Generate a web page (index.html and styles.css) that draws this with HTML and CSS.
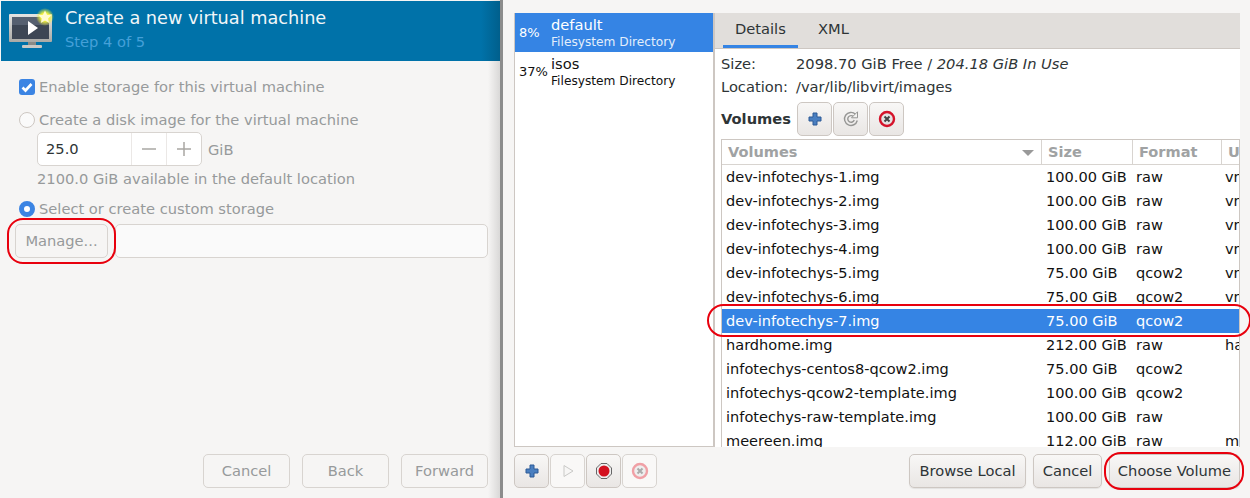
FILE: index.html
```html
<!DOCTYPE html>
<html lang="en">
<head>
<meta charset="UTF-8">
<title>Create a new virtual machine</title>
<link rel="stylesheet" href="styles.css">
</head>
<body>
<div class="wizard">
    <div class="wizard-header">
        <svg class="vm-icon" width="54" height="50" viewBox="0 0 54 50">
            <defs>
                <radialGradient id="glow"><stop offset="0.45" stop-color="#f2f23a"/><stop offset="1" stop-color="#f2f23a" stop-opacity="0"/></radialGradient>
                <linearGradient id="bezel" x1="0" y1="0" x2="0" y2="1"><stop offset="0" stop-color="#e4e4e2"/><stop offset="1" stop-color="#a9a9a5"/></linearGradient>
            </defs>
            <rect x="9" y="14" width="43" height="28" rx="1" fill="url(#bezel)"/>
            <rect x="12" y="17" width="37" height="22" fill="#3d4654"/>
            <rect x="12" y="17" width="37" height="8" fill="#566070"/>
            <rect x="28" y="42" width="8" height="3" fill="#8a8a86"/>
            <rect x="22" y="45" width="20" height="3" rx="1" fill="#c9c9c5"/>
            <path d="M28 21l10 7-10 7z" fill="#fff"/>
            <circle cx="45" cy="17" r="9" fill="url(#glow)"/>
            <path d="M45 10.500l2 4.300 4.600.5-3.400 3.100 1 4.600-4.200-2.400-4.200 2.400 1-4.600-3.400-3.100 4.600-.5z" fill="#fffbd0"/>
        </svg>
        <div class="wizard-heading">
            <div class="wizard-title">Create a new virtual machine</div>
            <div class="wizard-step">Step 4 of 5</div>
        </div>
    </div>
    <div class="wizard-body">
        <div class="option"><span class="check"><svg width="16" height="16" viewBox="0 0 16 16"><path d="M3.500 8.500l3 3 6-6.500" fill="none" stroke="#fff" stroke-width="2.600"/></svg></span>Enable storage for this virtual machine</div>
        <div class="option option-disk"><span class="radio"></span>Create a disk image for the virtual machine</div>
        <div class="size-row">
            <div class="spin">
                <span class="spin-value">25.0</span>
                <span class="spin-btn"><svg width="16" height="16" viewBox="0 0 16 16"><path d="M1 8h14" stroke="#a9a7a3" stroke-width="1.500"/></svg></span>
                <span class="spin-btn"><svg width="16" height="16" viewBox="0 0 16 16"><path d="M1 8h14M8 1v14" stroke="#a9a7a3" stroke-width="1.500"/></svg></span>
            </div>
            <span>GiB</span>
        </div>
        <div class="avail">2100.0 GiB available in the default location</div>
        <div class="option option-custom"><span class="radio radio-on"></span>Select or create custom storage</div>
        <div class="manage-row">
            <div class="btn btn-off btn-manage">Manage...</div>
            <div class="path-entry"></div>
        </div>
    </div>
    <div class="wizard-footer">
        <div class="btn btn-off">Cancel</div>
        <div class="btn btn-off">Back</div>
        <div class="btn btn-off">Forward</div>
    </div>
    <div class="ring ring-manage"></div>
</div>

<div class="browser">
    <div class="browser-main">
        <div class="pools">
            <div class="pool pool-selected">
                <span class="pool-pct">8%</span>
                <div class="pool-text"><div class="pool-name">default</div><div class="pool-type">Filesystem Directory</div></div>
            </div>
            <div class="pool">
                <span class="pool-pct">37%</span>
                <div class="pool-text"><div class="pool-name">isos</div><div class="pool-type">Filesystem Directory</div></div>
            </div>
        </div>
        <div class="details">
            <div class="tabs">
                <div class="tab tab-active">Details</div>
                <div class="tab">XML</div>
            </div>
            <div class="details-body">
                <div class="info-row"><span class="info-label">Size:</span><span>2098.70 GiB Free / <em>204.18 GiB In Use</em></span></div>
                <div class="info-row"><span class="info-label">Location:</span><span>/var/lib/libvirt/images</span></div>
                <div class="vol-bar">
                    <strong>Volumes</strong>
                    <div class="btn-group">
                        <div class="icon-btn"><svg width="16" height="16" viewBox="0 0 16 16"><path d="M6 2h4v4h4v4h-4v4H6v-4H2V6h4z" fill="#4a7fc0" stroke="#2c5a96"/></svg></div>
                        <div class="icon-btn"><svg width="18" height="18" viewBox="0 0 18 18"><path d="M13.500 4.200A6.500 6.500 0 1 0 15.300 10.500" fill="none" stroke="#969694" stroke-width="1.400"/><path d="M11.500 6.700A3.300 3.300 0 1 0 12.200 10" fill="none" stroke="#969694" stroke-width="1.400"/><path d="M15.500 1.800v6h-6z" fill="#f4f3f1" stroke="#969694"/></svg></div>
                        <div class="icon-btn"><svg width="18" height="18" viewBox="0 0 18 18"><circle cx="9" cy="9" r="7" fill="#e4e4e4" stroke="#d5132a" stroke-width="2.400"/><path d="M6.500 6.500l5 5M11.500 6.500l-5 5" stroke="#444" stroke-width="2"/></svg></div>
                    </div>
                </div>
                <div class="vol-table">
                    <div class="vol-head">
                        <div class="vol-head-cell vol-head-name">Volumes<span class="sort-arrow"></span></div>
                        <div class="vol-head-cell">Size</div>
                        <div class="vol-head-cell">Format</div>
                        <div class="vol-head-cell">Used By</div>
                    </div>
                    <div class="vol-row"><span>dev-infotechys-1.img</span><span>100.00 GiB</span><span>raw</span><span>vm1</span></div>
                    <div class="vol-row"><span>dev-infotechys-2.img</span><span>100.00 GiB</span><span>raw</span><span>vm2</span></div>
                    <div class="vol-row"><span>dev-infotechys-3.img</span><span>100.00 GiB</span><span>raw</span><span>vm3</span></div>
                    <div class="vol-row"><span>dev-infotechys-4.img</span><span>100.00 GiB</span><span>raw</span><span>vm4</span></div>
                    <div class="vol-row"><span>dev-infotechys-5.img</span><span>75.00 GiB</span><span>qcow2</span><span>vm5</span></div>
                    <div class="vol-row"><span>dev-infotechys-6.img</span><span>75.00 GiB</span><span>qcow2</span><span>vm6</span></div>
                    <div class="vol-row vol-row-selected"><span>dev-infotechys-7.img</span><span>75.00 GiB</span><span>qcow2</span><span></span></div>
                    <div class="vol-row"><span>hardhome.img</span><span>212.00 GiB</span><span>raw</span><span>hardhome</span></div>
                    <div class="vol-row"><span>infotechys-centos8-qcow2.img</span><span>75.00 GiB</span><span>qcow2</span><span></span></div>
                    <div class="vol-row"><span>infotechys-qcow2-template.img</span><span>100.00 GiB</span><span>qcow2</span><span></span></div>
                    <div class="vol-row"><span>infotechys-raw-template.img</span><span>100.00 GiB</span><span>raw</span><span></span></div>
                    <div class="vol-row"><span>meereen.img</span><span>112.00 GiB</span><span>raw</span><span>meereen</span></div>
                </div>
            </div>
        </div>
    </div>
    <div class="browser-footer">
        <div class="btn-group">
            <div class="icon-btn"><svg width="16" height="16" viewBox="0 0 16 16"><path d="M6 2h4v4h4v4h-4v4H6v-4H2V6h4z" fill="#4a7fc0" stroke="#2c5a96"/></svg></div>
            <div class="icon-btn icon-btn-off"><svg width="16" height="16" viewBox="0 0 16 16"><path d="M4 2.500l9 5.500-9 5.500z" fill="#f7f6f5" stroke="#c9c9c7"/></svg></div>
            <div class="icon-btn"><svg width="18" height="18" viewBox="0 0 18 18"><path d="M6 1.500h6L16.500 6v6L12 16.500H6L1.500 12V6z" fill="#eee" stroke="#666"/><circle cx="9" cy="9" r="5.500" fill="#d3101f"/></svg></div>
            <div class="icon-btn icon-btn-off"><svg width="18" height="18" viewBox="0 0 18 18"><circle cx="9" cy="9" r="7" fill="#eee" stroke="#f0a0a6" stroke-width="2.400"/><path d="M6.500 6.500l5 5M11.500 6.500l-5 5" stroke="#aaa" stroke-width="2"/></svg></div>
        </div>
        <div class="footer-right">
            <div class="btn btn-raised btn-browse">Browse Local</div>
            <div class="btn btn-raised btn-cancel">Cancel</div>
            <div class="btn btn-raised btn-choose">Choose Volume</div>
        </div>
    </div>
    <div class="ring ring-row"></div>
    <div class="ring ring-choose"></div>
</div>
</body>
</html>
```

FILE: styles.css
```css
* { margin:0; padding:0; box-sizing:border-box; }
body {
    font-family: "DejaVu Sans", sans-serif;
    font-size: 14.67px;
    width: 1250px;
    height: 498px;
    overflow: hidden;
    display: flex;
    background: #f6f5f4;
    color: #2e3436;
}

/* left window */
.wizard {
    position: relative;
    flex: 0 0 500px;
    height: 498px;
    display: flex;
    flex-direction: column;
    padding-top: 1px;
    padding-left: 1px;
    background: linear-gradient(90deg, #f6f5f4 488px, #d9d8d7 500px);
    color: #979a9b;
}
.wizard-header {
    height: 60px;
    background: linear-gradient(90deg, #0072a9 480px, #005f8c 499px);
    display: flex;
    gap: 12px;
}
.vm-icon { margin: -1px -1px 0 -1px; flex-shrink: 0; }
.wizard-heading { padding-top: 5px; }
.wizard-title { color: #f2f6f8; font-size: 17.7px; line-height: 24px; }
.wizard-step { color: #45a0d8; line-height: 18px; margin-top: 3px; }
.wizard-body {
    flex: 1;
    padding: 0 0 0 18px;
    display: flex;
    flex-direction: column;
}
.option {
    display: flex;
    align-items: center;
    gap: 4px;
    height: 16px;
    line-height: 14px;
    margin-top: 18px;
}
.option-disk { margin-top: 17px; }
.option-custom { margin-top: 12px; }
.check {
    width: 16px;
    height: 16px;
    background: #3b84e3;
    border-radius: 3px;
}
.check svg { display: block; }
.radio {
    width: 16px;
    height: 16px;
    border-radius: 50%;
    border: 1px solid #cdc7c2;
    background: #fafafa;
}
.radio-on { border: 5px solid #3b84e3; background: #fff; }
.size-row {
    display: flex;
    align-items: center;
    gap: 6px;
    margin: 4px 0 0 18px;
}
.spin {
    width: 165px;
    height: 34px;
    display: flex;
    background: #fff;
    border: 1px solid #d8d4d0;
    border-radius: 5px;
}
.spin-value { flex: 1; color: #2e3436; line-height: 32px; padding-left: 8px; }
.spin-btn {
    width: 35px;
    border-left: 1px solid #ebe8e6;
    display: flex;
    align-items: center;
    justify-content: center;
}
.avail { margin: 5px 0 0 18px; height: 18px; line-height: 16px; }
.manage-row {
    display: flex;
    gap: 7px;
    margin: 7px 0 0 -4px;
}
.btn-manage { width: 93px; }
.path-entry {
    width: 373px;
    height: 34px;
    background: #fafafa;
    border: 1px solid #d8d4d0;
    border-radius: 5px;
}
.wizard-footer {
    display: flex;
    justify-content: flex-end;
    gap: 12px;
    padding: 0 12px 10px 0;
}
.wizard-footer .btn { width: 87px; }

/* buttons */
.btn {
    height: 34px;
    line-height: 32px;
    text-align: center;
    white-space: nowrap;
    border: 1px solid #cdc7c2;
    border-radius: 5px;
}
.btn-off { background: #f6f5f4; color: #979a9b; border-color: #d8d4d0; }
.btn-raised {
    background: linear-gradient(#f8f7f6, #e9e6e4);
    color: #2e3436;
    box-shadow: 0 1px 1px rgba(0,0,0,0.08);
}
.btn-browse { width: 117px; }
.btn-cancel { width: 69px; }
.btn-choose { width: 131px; }
.btn-group { display: flex; gap: 1px; }
.icon-btn {
    width: 35px;
    height: 34px;
    border: 1px solid #cdc7c2;
    border-radius: 5px;
    background: linear-gradient(#f8f7f6, #e9e6e4);
    display: flex;
    align-items: center;
    justify-content: center;
}
.icon-btn-off { background: #f9f8f7; border-color: #d8d4d0; }

/* right window */
.browser {
    position: relative;
    flex: 1;
    min-width: 0;
    display: flex;
    flex-direction: column;
    border-left: 3px solid #8c8c8c;
    padding: 13px 10px 0 11px;
}
.browser-main {
    display: flex;
    height: 434px;
}
.pools {
    flex: 0 0 201px;
    background: #fff;
    border: 1px solid #cdc7c2;
    border-top: none;
    border-right-width: 2px;
}
.pool {
    height: 39px;
    display: flex;
    align-items: center;
    color: #111;
}
.pool-selected { background: #3584e4; color: #fff; }
.pool-pct { width: 36px; padding-left: 4px; font-size: 13px; flex-shrink: 0; }
.pool-text { padding-top: 1px; }
.pool-name { line-height: 17px; margin-bottom: 1px; }
.pool-type { font-size: 12.2px; line-height: 17px; }
.pool-selected .pool-type { color: #e3eefb; }
.details {
    flex: 1;
    min-width: 0;
    display: flex;
    flex-direction: column;
    background: #fff;
}
.tabs {
    height: 36px;
    flex-shrink: 0;
    background: #e1dedb;
    border-bottom: 1px solid #cdc7c2;
    display: flex;
    padding-left: 8px;
}
.tab {
    padding: 0 13px;
    line-height: 31px;
    height: 35px;
}
.tab-active { border-bottom: 3px solid #3584e4; width: 75px; margin-right: 7px; padding: 0 12px; }
.details-body {
    flex: 1;
    min-height: 0;
    padding: 4px 0 0 6px;
    display: flex;
    flex-direction: column;
}
.info-row { height: 23px; line-height: 21px; display: flex; }
.info-label { width: 75px; }
.vol-bar {
    display: flex;
    align-items: center;
    gap: 6px;
    margin-top: 3px;
    height: 34px;
}
.vol-bar strong { padding-bottom: 2px; }
.vol-table {
    margin-top: 3px;
    flex: 1;
    min-height: 0;
    overflow: hidden;
    border: 1px solid #cdc7c2;
    border-bottom: none;
    color: #111;
    font-size: 14.55px;
}
.vol-head, .vol-row {
    display: grid;
    grid-template-columns: 319px 91px 89px 60px;
}
.vol-head {
    height: 25px;
    border-bottom: 1px solid #d8d4d0;
}
.vol-head-cell {
    font-weight: bold;
    color: #a0a2a3;
    line-height: 24px;
    padding-left: 6px;
    border-left: 1px solid #d8d4d0;
    white-space: nowrap;
}
.vol-head-name { border-left: none; position: relative; }
.sort-arrow {
    position: absolute;
    right: 7px;
    top: 10px;
    border-left: 6px solid transparent;
    border-right: 6px solid transparent;
    border-top: 6px solid #999;
}
.vol-row {
    height: 24px;
    line-height: 24px;
    white-space: nowrap;
}
.vol-row span { padding-left: 4px; overflow: hidden; }
.vol-row span:nth-child(2) { padding-left: 5px; }
.vol-row-selected { background: #3584e4; color: #fff; }
.browser-footer {
    display: flex;
    justify-content: space-between;
    margin-top: 7px;
}
.footer-right { display: flex; gap: 7px; }

/* red marks drawn over the screenshot */
.ring {
    position: absolute;
    border: 2px solid #e8000d;
    pointer-events: none;
}
.ring-manage { left: 7px; top: 218px; width: 109px; height: 46px; border-radius: 16px; }
.ring-row { left: 204px; top: 304px; width: 544px; height: 33px; border-radius: 17px; }
.ring-choose { left: 601px; top: 452px; width: 140px; height: 38px; border-radius: 17px; }
```
